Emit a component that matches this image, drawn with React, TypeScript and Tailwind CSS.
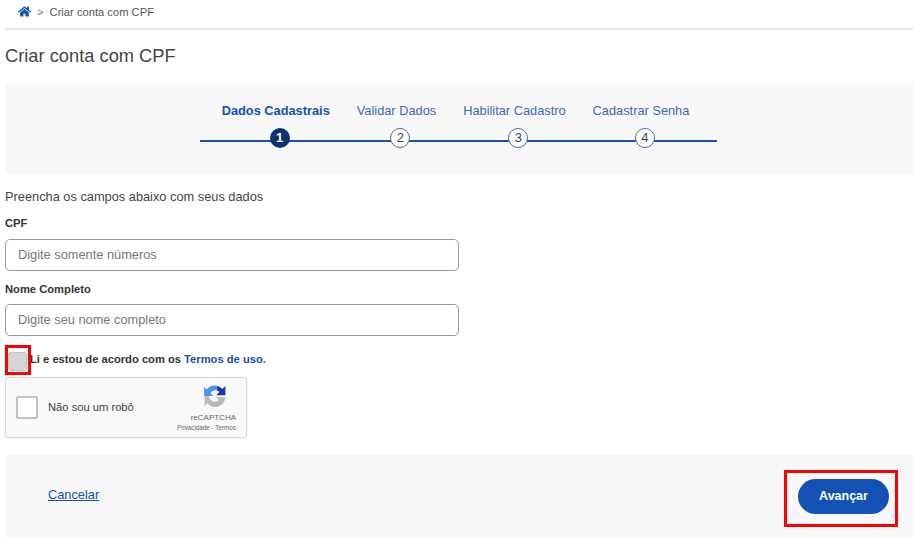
import { FaHome } from "react-icons/fa";

const steps = [
  { n: 1, label: "Dados Cadastrais", active: true },
  { n: 2, label: "Validar Dados", active: false },
  { n: 3, label: "Habilitar Cadastro", active: false },
  { n: 4, label: "Cadastrar Senha", active: false },
];

function RecaptchaLogo() {
  return (
    <svg width="26" height="26" viewBox="0 0 30 30" fill="none">
      <path d="M17 3.200A12 12 0 0 1 23.500 7L27 3.500V14H16.500L20 10.500A7 7 0 0 0 17 8.500Z" fill="#1c3aa9" />
      <path d="M17 3.200A12 12 0 0 0 5.500 7.500L2.500 4.500V15H13L9.500 11.500A7 7 0 0 1 17 8.500Z" fill="#4a90f5" />
      <path d="M3 15H8A7 7 0 0 0 19.500 20L16 16.500H27A12 12 0 0 1 6 23.500L3 27Z" fill="#b8b8b8" />
    </svg>
  );
}

export default function App() {
  return (
    <div className="w-[920px] h-[550px] bg-white pl-[5px] text-[#333] overflow-hidden relative font-['Liberation_Sans',Arial,sans-serif]">
      <div className="w-[908px]">

        {/* Breadcrumb */}
        <div className="h-[30px] border-b-2 border-[#e8e8e8] flex items-start pt-[4px] pl-[13px] text-[11.2px]">
          <FaHome className="text-[#1351b4] mt-px" size={13} />
          <span className="ml-[6px] text-[#777]">&gt;</span>
          <span className="ml-[6px] text-[#555]">Criar conta com CPF</span>
        </div>

        <h1 className="mt-[14px] text-[18.3px] leading-[24px] text-[#444]">Criar conta com CPF</h1>

        {/* Stepper */}
        <div className="mt-[15px] h-[91px] bg-[#f8f8f8] flex justify-center pt-[20px] pr-[2px]">
          <div className="relative w-[517px] h-[48px] flex justify-center gap-[27px] pr-[5px]">
            <div className="absolute left-0 right-0 top-[37px] h-[2px] bg-[#1351b4]" />
            {steps.map((s) => (
              <div key={s.n} className="relative flex flex-col items-center">
                <span className={"text-[12.8px] leading-[16px] " + (s.active ? "font-bold text-[#1351b4]" : "text-[#3f66bd]")}>
                  {s.label}
                </span>
                <span
                  className={
                    "mt-[9px] ml-[8px] w-5 h-5 rounded-full flex items-center justify-center text-[13px] " +
                    (s.active
                      ? "bg-[#0c326f] text-white font-bold"
                      : "bg-white border border-[#4b6a9b] text-[#444]")
                  }
                >
                  {s.n}
                </span>
              </div>
            ))}
          </div>
        </div>

        {/* Form */}
        <p className="mt-[15px] text-[12.8px] leading-[16px] text-[#444]">Preencha os campos abaixo com seus dados</p>

        <label className="block mt-[11px] text-[11.2px] leading-[14px] font-bold">CPF</label>
        <div className="mt-[9px] w-[454px] h-[32px] border border-[#999] rounded-[5px] flex items-center pl-[12px] text-[12.8px] text-[#777]">
          Digite somente números
        </div>

        <label className="block mt-[11px] text-[11.2px] leading-[14px] font-bold">Nome Completo</label>
        <div className="mt-[8px] w-[454px] h-[32px] border border-[#999] rounded-[5px] flex items-center pl-[12px] text-[12.8px] text-[#777]">
          Digite seu nome completo
        </div>

        <div className="mt-[13px] h-[21px] flex items-center text-[11.2px] font-bold">
          <span className="ml-[3px] mt-[3px] w-[19px] h-[19px] rounded-[3px] bg-[#d6d6d6] border border-[#c4c4c4]" />
          <span className="ml-[3px]">Li e estou de acordo com os</span>
          <span className="ml-[3px] text-[#1351b4]">Termos de uso.</span>
        </div>

        {/* reCAPTCHA */}
        <div className="mt-[7px] w-[242px] h-[61px] bg-[#f9f9f9] border border-[#d8d8d8] rounded-[3px] shadow-[0_0_3px_rgba(0,0,0,0.08)] flex items-center pl-[10px]">
          <span className="w-[22px] h-[23px] bg-white border-2 border-[#c1c1c1] rounded-[2px]" />
          <span className="ml-[10px] text-[11.2px] text-[#444]">Não sou um robô</span>
          <div className="ml-auto mr-[10px] flex flex-col items-end">
            <div className="mr-[8px]"><RecaptchaLogo /></div>
            <span className="mt-[4px] text-[8px] leading-[10px] text-[#666]">reCAPTCHA</span>
            <span className="mt-[1px] text-[6.3px] leading-[8px] text-[#666] whitespace-nowrap">Privacidade - Termos</span>
          </div>
        </div>

        {/* Footer */}
        <div className="mt-[17px] h-[83px] bg-[#f8f8f8] flex items-center justify-between pl-[43px] pr-[24px]">
          <a className="mb-[3px] text-[12.8px] text-[#1351b4] underline">Cancelar</a>
          <button className="w-[91px] h-[35px] rounded-full bg-[#1351b4] text-white text-[12.5px] font-bold">Avançar</button>
        </div>
      </div>

      {/* Red annotations */}
      <div className="absolute left-[5px] top-[345px] w-[26px] h-[30px] border-[3px] border-[#ff0000]" />
      <div className="absolute left-[784px] top-[470px] w-[114px] h-[57px] border-[3px] border-[#ff0000]" />
    </div>
  );
}
